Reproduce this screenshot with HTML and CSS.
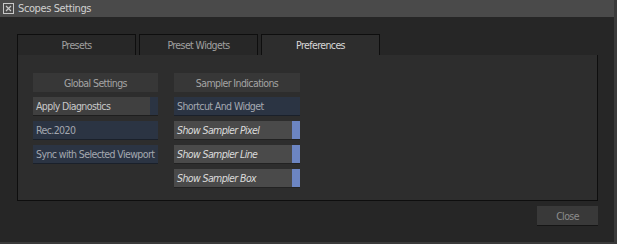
FILE: index.html
```html
<!DOCTYPE html>
<html lang="en">
<head>
  <meta charset="UTF-8" />
  <title>Scopes Settings</title>
  <link rel="stylesheet" href="styles.css">
</head>
<body>
  <div class="window">
    <div class="titlebar">
      <span class="close-box">
        <svg width="11" height="11" viewBox="0 0 11 11">
          <rect x="0.5" y="0.5" width="10" height="10" fill="none" stroke="#c8c8c8" />
          <path d="M3 3 L8 8 M8 3 L3 8" stroke="#c8c8c8" stroke-width="1.2" />
        </svg>
      </span>
      Scopes Settings
    </div>

    <div class="body">
      <div class="tabs">
        <div class="tab">Presets</div>
        <div class="tab">Preset Widgets</div>
        <div class="tab active">Preferences</div>
      </div>

      <div class="panel">
        <div class="column">
          <div class="header">Global Settings</div>
          <div class="btn toggle-off">Apply Diagnostics<span class="ind"></span></div>
          <div class="btn blue">Rec.2020</div>
          <div class="btn blue">Sync with Selected Viewport</div>
        </div>

        <div class="column">
          <div class="header">Sampler Indications</div>
          <div class="btn blue">Shortcut And Widget</div>
          <div class="btn toggle-on">Show Sampler Pixel<span class="ind"></span></div>
          <div class="btn toggle-on">Show Sampler Line<span class="ind"></span></div>
          <div class="btn toggle-on">Show Sampler Box<span class="ind"></span></div>
        </div>
      </div>

      <div class="footer">
        <div class="close">Close</div>
      </div>
    </div>
  </div>
</body>
</html>
```

FILE: styles.css
```css
html, body {
  margin: 0;
  padding: 0;
  background-color: #262626;
}

body {
  font-family: "DejaVu Sans Condensed", "DejaVu Sans", sans-serif;
  font-size: 10.5px;
  letter-spacing: -0.6px;
  color: #bcbcbc;
  white-space: nowrap;
}

.window {
  width: 617px;
  height: 244px;
  box-sizing: border-box;
  border-right: 3px solid #3a3a3a;
  border-bottom: 2px solid #3a3a3a;
  background: #262626;
}

.titlebar {
  height: 17px;
  background: #4a4a4a;
  color: #d0d0d0;
  font-size: 11px;
  letter-spacing: -0.4px;
  display: flex;
  align-items: center;
  gap: 4px;
  padding-left: 3px;
}

.close-box {
  display: flex;
}

.body {
  padding: 17px 16px 0 17px;
}

.tabs {
  display: flex;
  gap: 3px;
  height: 21px;
}

.tab {
  width: 117px;
  border: 1px solid #0e0e0e;
  border-bottom: none;
  background: #272727;
  color: #a0a0a0;
  display: flex;
  align-items: center;
  justify-content: center;
}

.tab.active {
  background: #2d2d2d;
  color: #d8d8d8;
}

.panel {
  height: 146px;
  box-sizing: border-box;
  background: #2d2d2d;
  border-left: 1px solid #0e0e0e;
  border-right: 1px solid #0e0e0e;
  border-bottom: 1px solid #0e0e0e;
  padding: 18px 0 0 15px;
  display: flex;
  gap: 16px;
}

.column {
  display: flex;
  flex-direction: column;
  gap: 5px;
}

.column:first-child {
  width: 125px;
}

.column:last-child {
  width: 126px;
}

.header {
  height: 19px;
  background: #373737;
  color: #a4a4a4;
  display: flex;
  align-items: center;
  justify-content: center;
}

.btn {
  height: 19px;
  box-sizing: border-box;
  display: flex;
  align-items: center;
  padding-left: 3px;
}

.blue {
  background: #2b3443;
  color: #a4a8b0;
  border-bottom: 1px solid #1a202a;
}

.toggle-off {
  background: #404040;
  color: #c8c8c8;
  border-bottom: 1px solid #1e1e1e;
}

.toggle-off .ind {
  background: #2b3443;
}

.toggle-on {
  background: #4a4a4a;
  color: #dcdcdc;
  font-style: italic;
  border-bottom: 1px solid #222;
}

.toggle-on .ind {
  background: #6c85c2;
}

.ind {
  margin-left: auto;
  width: 8px;
  align-self: stretch;
}

.footer {
  display: flex;
  justify-content: flex-end;
  padding-top: 5px;
}

.close {
  width: 61px;
  height: 19px;
  background: #393939;
  color: #8c8c8c;
  border-bottom: 1px solid #151515;
  display: flex;
  align-items: center;
  justify-content: center;
}
```
